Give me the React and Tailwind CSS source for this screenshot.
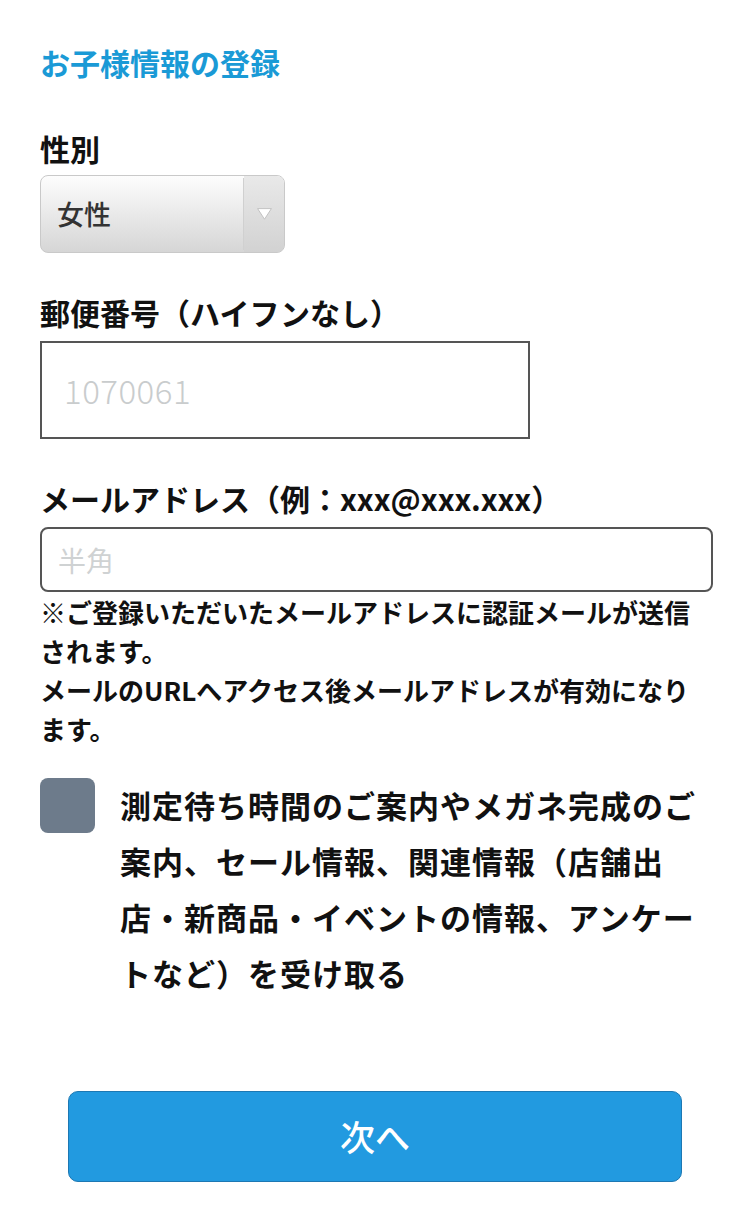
import React from "react";

const font = { fontFamily: '"Noto Sans CJK JP", "Noto Sans", sans-serif' };

const Label = ({ children, className = "" }) => (
  <div className={`text-[30px] leading-[40px] font-bold text-[#111] ${className}`}>
    {children}
  </div>
);

const GenderSelect = () => (
  <div className="mt-[7px] flex h-[78px] w-[245px] overflow-hidden rounded-[8px] border border-[#c9c9c9] bg-gradient-to-b from-[#fdfdfd] to-[#d6d6d6]">
    <div className="flex flex-1 items-center pl-[16px] text-[27px] font-medium text-[#333]">女性</div>
    <div className="my-[2px] w-px bg-[#d0d0d0]" />
    <div className="flex w-[40px] items-center justify-center bg-gradient-to-b from-[#e9e9e9] to-[#d2d2d2]">
      <svg width="15" height="12" viewBox="0 0 15 12">
        <path d="M0.6 0.6 L14.4 0.6 L7.5 11.2 Z" fill="#fff" stroke="#bdbdbd" strokeWidth="0.9" />
      </svg>
    </div>
  </div>
);

export default function App() {
  return (
    <div className="min-h-[1206px] bg-white pl-[40px] pr-[37px] pt-[42px]" style={font}>
      <h1 className="text-[30px] leading-[40px] font-bold text-[#1a9ad6]">お子様情報の登録</h1>

      <Label className="mt-[46px]">性別</Label>
      <GenderSelect />

      <Label className="mt-[39px]">郵便番号（ハイフンなし）</Label>
      <input
        type="text"
        placeholder="1070061"
        className="mt-[9px] block h-[98px] w-[490px] border-2 border-[#555] bg-white pl-[22px] text-[33px] font-light tracking-[0.5px] text-[#333] outline-none placeholder:text-[#c9cccd]"
      />

      <Label className="mt-[39px]">メールアドレス（例：xxx@xxx.xxx）</Label>
      <input
        type="text"
        placeholder="半角"
        className="mt-[9px] block h-[65px] w-full rounded-[8px] border-2 border-[#555] bg-white pl-[16px] text-[28px] text-[#333] outline-none placeholder:text-[#cfd2d3]"
      />
      <p className="pr-[20px] text-[26px] leading-[39px] font-bold text-[#111]">
        ※ご登録いただいたメールアドレスに認証メールが送信されます。
        <br />
        メールのURLへアクセス後メールアドレスが有効になります。
      </p>

      <div className="mt-[30px] flex items-start gap-[25px]">
        <div className="h-[55px] w-[55px] shrink-0 rounded-[8px] bg-[#6d7b8b]" />
        <p className="-mt-[1px] w-[590px] text-[31px] leading-[56px] font-bold tracking-[1px] text-[#111]">
          測定待ち時間のご案内やメガネ完成のご案内、セール情報、関連情報（店舗出店・新商品・イベントの情報、アンケートなど）を受け取る
        </p>
      </div>

      <div className="mt-[90px] flex justify-center pr-[3px]">
        <button className="h-[91px] w-[614px] rounded-[10px] border border-[#1d78b3] bg-[#229ae0] text-[35px] font-medium text-white">
          次へ
        </button>
      </div>
    </div>
  );
}
